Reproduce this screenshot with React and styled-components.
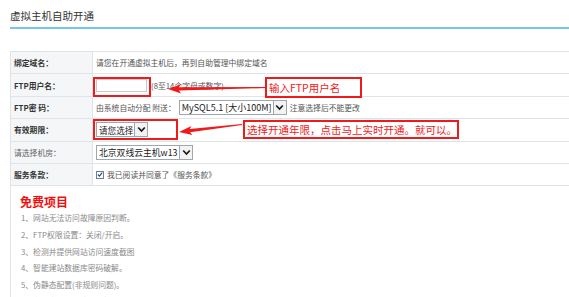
import React from 'react'
import styled, { createGlobalStyle } from 'styled-components'

const GlobalStyle = createGlobalStyle`
  body {
    margin: 0;
    background: #fff;
    font-family: "Noto Sans CJK SC", "Noto Sans", sans-serif;
  }
`

const Page = styled.div`
  position: relative;
  width: 569px;
  height: 297px;
  overflow: hidden;
  padding-left: 10px;
  box-sizing: border-box;
`

const TitleBar = styled.div`
  padding: 8px 0 3px;
  border-bottom: 2px solid #74c6f1;
  font-size: 10.5px;
  line-height: 16px;
  color: #333;
`

const Table = styled.div`
  margin-top: 22px;
  border-top: 1px solid #dfe4e8;
  border-left: 1px solid #dfe4e8;
`

const Row = styled.div`
  display: grid;
  grid-template-columns: 82px 1fr;
  height: 22.4px;
  box-sizing: border-box;
  border-bottom: 1px solid #dfe4e8;
`

const Label = styled.div`
  display: flex;
  align-items: center;
  padding-left: 3px;
  background: #f4f6f8;
  border-right: 1px solid #dfe4e8;
  font-size: 7.8px;
  font-weight: ${({ $plain }) => ($plain ? 'normal' : 'bold')};
  color: ${({ $plain }) => ($plain ? '#666' : '#333')};
`

const Value = styled.div`
  display: flex;
  align-items: center;
  gap: ${({ $gap }) => $gap || 3}px;
  padding-left: 3px;
  font-size: 7.8px;
  color: #555;
`

const TextInput = styled.div`
  width: 51px;
  height: 13px;
  box-sizing: border-box;
  border: 1px solid #c3cad2;
  background: #fff;
`

const Select = styled.div`
  display: flex;
  align-items: stretch;
  width: ${({ $w }) => $w}px;
  height: 15px;
  box-sizing: border-box;
  border: 1px solid #9ea6ae;
  background: #fff;
  font-size: ${({ $fs }) => $fs || 9}px;
  color: #222;
`

const SelectText = styled.span`
  flex: 1;
  display: flex;
  align-items: center;
  padding-left: 2px;
  white-space: nowrap;
  overflow: hidden;
`

const SelectArrow = styled.span`
  width: 12px;
  flex: none;
  display: flex;
  align-items: center;
  justify-content: center;
  border-left: 1px solid #9ea6ae;
  background: #f3f3f3;
`

const Check = styled.span`
  width: 8px;
  height: 8px;
  box-sizing: border-box;
  border: 1px solid #6d7f93;
  background: #fff;
  display: flex;
  align-items: center;
  justify-content: center;
`

const Extra = styled.div`
  border-left: 1px solid #dfe4e8;
  padding: 8px 0 0 9px;
`

const Heading = styled.div`
  font-size: 12px;
  line-height: 16px;
  font-weight: bold;
  color: #f40d0d;
`

const List = styled.div`
  padding-left: 1px;
  font-size: 7.8px;
  line-height: 16.6px;
  color: #8a8a8a;
`

const RedFrame = styled.div`
  position: absolute;
  left: ${({ $x }) => $x}px;
  top: ${({ $y }) => $y}px;
  width: ${({ $w }) => $w}px;
  height: ${({ $h }) => $h}px;
  box-sizing: border-box;
  border: 2px solid #f01a1a;
`

const Note = styled(RedFrame)`
  display: flex;
  align-items: center;
  padding-left: 2px;
  background: #fff;
  font-size: 10.5px;
  color: #f01a1a;
  white-space: nowrap;
`

const Overlay = styled.svg`
  position: absolute;
  left: 0;
  top: 0;
  pointer-events: none;
`

const Chevron = () => (
  <svg width="9" height="7" viewBox="0 0 9 7">
    <path d="M1.2 1.5 L4.5 5 L7.8 1.5" fill="none" stroke="#1a1a1a" strokeWidth="1.7" />
  </svg>
)

const Tick = () => (
  <svg width="7" height="7" viewBox="0 0 7 7">
    <path d="M1 3.5 L2.8 5.3 L6 1.3" fill="none" stroke="#2b4a73" strokeWidth="1.3" />
  </svg>
)

// tapered arrow from tail (x1,y1) to tip (x2,y2)
const arrowPoints = (x1, y1, x2, y2) => {
  const dx = x2 - x1
  const dy = y2 - y1
  const len = Math.hypot(dx, dy)
  const ux = dx / len
  const uy = dy / len
  const nx = -uy
  const ny = ux
  const bx = x2 - ux * 13
  const by = y2 - uy * 13
  const nb = x2 - ux * 11
  const mb = y2 - uy * 11
  const p = (x, y, k) => `${x + nx * k},${y + ny * k}`
  return [
    p(x1, y1, 0.6),
    p(nb, mb, 1.6),
    p(bx, by, 4.6),
    p(x2, y2, 0),
    p(bx, by, -4.6),
    p(nb, mb, -1.6),
    p(x1, y1, -0.6),
  ].join(' ')
}

const items = [
  '1、网站无法访问故障原因判断。',
  '2、FTP权限设置：关闭/开启。',
  '3、检测并提供网站访问速度截图',
  '4、智能建站数据库密码破解。',
  '5、伪静态配置(非规则问题)。',
  '6、主机空间使用情况分析与优化。',
]

const App = () => {
  return (
    <Page>
      <GlobalStyle />
      <TitleBar>虚拟主机自助开通</TitleBar>
      <Table>
        <Row>
          <Label>绑定域名：</Label>
          <Value>请您在开通虚拟主机后，再到自助管理中绑定域名</Value>
        </Row>
        <Row>
          <Label>FTP用户名：</Label>
          <Value $gap={4}>
            <TextInput />
            <span>(8至14个字母或数字)</span>
          </Value>
        </Row>
        <Row>
          <Label>FTP密 码：</Label>
          <Value>
            <span>由系统自动分配 附送：</span>
            <Select $w={108}>
              <SelectText>MySQL5.1 [大小100M]</SelectText>
              <SelectArrow><Chevron /></SelectArrow>
            </Select>
            <span>注意选择后不能更改</span>
          </Value>
        </Row>
        <Row>
          <Label>有效期限：</Label>
          <Value>
            <Select $w={52} $fs={8.6}>
              <SelectText>请您选择</SelectText>
              <SelectArrow><Chevron /></SelectArrow>
            </Select>
          </Value>
        </Row>
        <Row>
          <Label $plain>请选择机房：</Label>
          <Value>
            <Select $w={97} $fs={8.8}>
              <SelectText>北京双线云主机w13</SelectText>
              <SelectArrow><Chevron /></SelectArrow>
            </Select>
          </Value>
        </Row>
        <Row>
          <Label>服务条款：</Label>
          <Value>
            <Check><Tick /></Check>
            <span>我已阅读并同意了《服务条款》</span>
          </Value>
        </Row>
      </Table>
      <Extra>
        <Heading>免费项目</Heading>
        <List>
          {items.map((t) => (
            <div key={t}>{t}</div>
          ))}
        </List>
      </Extra>

      <RedFrame $x={93} $y={77} $w={58} $h={20} />
      <RedFrame $x={93} $y={119} $w={85} $h={21} />
      <Note $x={265} $y={77} $w={97} $h={21}>输入FTP用户名</Note>
      <Note $x={243} $y={120} $w={216} $h={19}>选择开通年限，点击马上实时开通。就可以。</Note>
      <Overlay width="569" height="297">
        <polygon points={arrowPoints(265, 87.5, 168, 89)} fill="#f01a1a" />
        <polygon points={arrowPoints(242, 124.5, 179, 132)} fill="#f01a1a" />
      </Overlay>
    </Page>
  )
}

export default App
